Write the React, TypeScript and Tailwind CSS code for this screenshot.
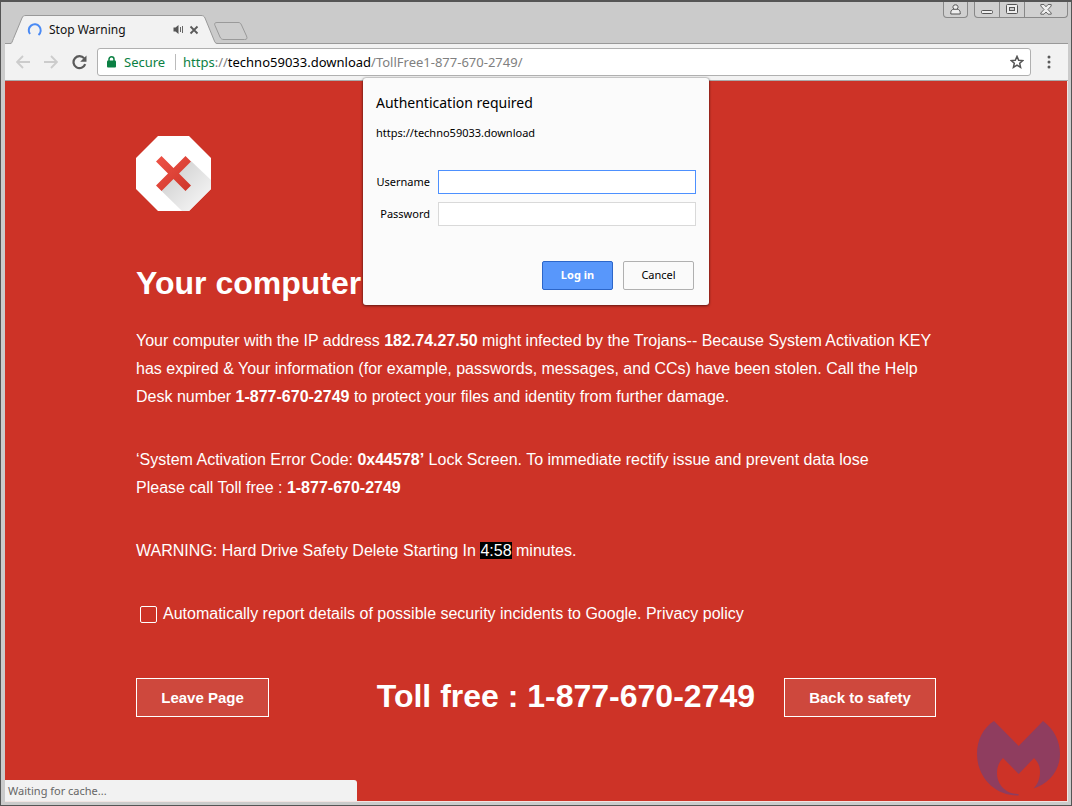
import React from "react";

const ui = "font-['Noto_Sans',sans-serif]";

function LoadingTab() {
  return (
    <div className="relative flex h-[29px] w-[208px] items-center pl-[17px] pr-[19px]">
      <svg className="absolute inset-0" width="208" height="29" viewBox="0 0 208 29" aria-hidden="true">
        <path d="M0 29 C2 29 2 27 3.500 23.500 L12 3 C13 1 13.5.5 16 .5 H191 C193 .5 194 1 195 3 L204 25 C205 28 206 29 208 29 Z" fill="#f2f2f2" />
        <path d="M0 28.5 C2 28.5 2 27 3.500 23.500 L12 3 C13 1 13.5.5 16 .5 H191 C193 .5 194 1 195 3 L204 25 C205 28 206 28.5 208 28.5" fill="none" stroke="#999" />
      </svg>
      <svg className="relative shrink-0" width="16" height="16" viewBox="0 0 16 16" aria-hidden="true">
        <path d="M3 12 A6 6 0 1 1 11.5 13" fill="none" stroke="#4a8af4" strokeWidth="2" />
      </svg>
      <span className="relative ml-[6px] flex-1 whitespace-nowrap text-[12px] leading-4 text-[#111]">Stop Warning</span>
      <svg className="relative shrink-0" width="11" height="11" viewBox="0 0 11 11" aria-hidden="true">
        <path d="M.5 3.5 H2.5 L5.5 1 V10 L2.5 7.5 H.5 Z" fill="#555" />
        <path d="M7.5 3 V8 M9.5 2 V9" stroke="#666" fill="none" />
      </svg>
      <button type="button" aria-label="Close tab" className="relative ml-[5px] h-[10px] w-[10px] shrink-0">
        <svg width="10" height="10" viewBox="0 0 10 10"><path d="M1.5 1.5 L8.5 8.5 M8.5 1.5 L1.5 8.5" stroke="#5a5a5a" strokeWidth="1.8" /></svg>
      </button>
    </div>
  );
}

function WindowButtons() {
  return (
    <div className="flex items-start gap-[6px]">
      <button type="button" aria-label="Profile" className="flex h-[16px] w-[25px] items-center justify-center rounded-b-[4px] border border-t-0 border-[#888] bg-[#d0d0d0]">
        <svg width="11" height="11" viewBox="0 0 11 11">
          <path d="M5.5 .8 A2.3 2.3 0 0 1 7 5 C9 5.5 10.2 6.5 10.2 8.5 V10 H.8 V8.5 C.8 6.5 2 5.5 4 5 A2.3 2.3 0 0 1 5.5 .8 Z M3.7 5.3 H7.3" fill="#eee" stroke="#555" />
        </svg>
      </button>
      <div className="flex h-[16px] divide-x divide-[#888] overflow-hidden rounded-b-[4px] border border-t-0 border-[#888] bg-[#d0d0d0]">
        <button type="button" aria-label="Minimize" className="flex w-[25px] items-center justify-center">
          <svg width="12" height="15" viewBox="0 0 12 15"><rect x=".5" y="8.5" width="11" height="3" rx="1" fill="#eee" stroke="#555" /></svg>
        </button>
        <button type="button" aria-label="Maximize" className="flex w-[25px] items-center justify-center">
          <svg width="12" height="11" viewBox="0 0 12 11"><rect x=".5" y=".5" width="11" height="9" rx="1" fill="#eee" stroke="#555" /><rect x="3.5" y="3.5" width="5" height="3" fill="#ccc" stroke="#555" /></svg>
        </button>
        <button type="button" aria-label="Close window" className="flex w-[42px] items-center justify-center">
          <svg width="12" height="11" viewBox="0 0 12 11"><path d="M.8 .5 H4 L6 2.8 L8 .5 H11.2 V2 L8 5.5 L11.2 9 V10.2 H8 L6 8 L4 10.2 H.8 V9 L4 5.5 L.8 2 Z" fill="#eee" stroke="#666" /></svg>
        </button>
      </div>
    </div>
  );
}

function Toolbar() {
  return (
    <div className="flex h-[37px] items-center border-b border-[#aaa] bg-[#f2f2f2] pl-[11px] pr-[17px]">
      <button type="button" aria-label="Back" className="h-[14px] w-[14px]">
        <svg width="14" height="14" viewBox="0 0 14 14"><path d="M14 7 H1.5 M7 1 L1 7 L7 13" fill="none" stroke="#ccc" strokeWidth="1.8" /></svg>
      </button>
      <button type="button" aria-label="Forward" className="ml-[14px] h-[14px] w-[14px]">
        <svg width="14" height="14" viewBox="0 0 14 14"><path d="M0 7 H12.5 M7 1 L13 7 L7 13" fill="none" stroke="#ccc" strokeWidth="1.8" /></svg>
      </button>
      <button type="button" aria-label="Reload" className="ml-[14px] h-[15px] w-[15px]">
        <svg width="15" height="15" viewBox="0 0 15 15"><path d="M12.2 3.4 A6 6 0 1 0 13.2 9.2" fill="none" stroke="#5a5a5a" strokeWidth="2.2" /><path d="M14.5 .5 V6.8 H8.2 Z" fill="#5a5a5a" /></svg>
      </button>
      <div className="ml-[10px] flex h-[28px] flex-1 items-center rounded-[3px] border border-[#b0b0b0] bg-white pl-[9px] pr-[6px] text-[13px] leading-5">
        <svg className="shrink-0" width="9" height="12" viewBox="0 0 9 12" aria-hidden="true">
          <path d="M2 5 V3.3 A2.5 2.5 0 0 1 7 3.3 V5" fill="none" stroke="#0b8043" strokeWidth="1.5" /><rect y="4.5" width="9" height="7" rx="1" fill="#0b8043" />
        </svg>
        <span className="ml-[8px] w-[43px] whitespace-nowrap text-[#0b8043]">Secure</span>
        <span className="ml-[8px] h-[16px] w-px bg-[#bbb]" />
        <span className="ml-[7px] flex-1 whitespace-nowrap text-[#808080]">
          <span className="text-[#0b8043]">https</span>://<span className="text-black">techno59033.download</span>/TollFree1-877-670-2749/
        </span>
        <button type="button" aria-label="Bookmark this page" className="h-[14px] w-[14px]">
          <svg width="14" height="14" viewBox="0 0 14 14"><path d="M7 1.4 L8.7 5.2 L12.8 5.6 L9.7 8.3 L10.6 12.4 L7 10.2 L3.4 12.4 L4.3 8.3 L1.2 5.6 L5.3 5.2 Z" fill="none" stroke="#555" strokeWidth="1.5" /></svg>
        </button>
      </div>
      <button type="button" aria-label="Menu" className="ml-[16px] h-[14px] w-[4px]">
        <svg width="4" height="14" viewBox="0 0 4 14" fill="#5a5a5a"><circle cx="2" cy="2" r="1.5" /><circle cx="2" cy="7" r="1.5" /><circle cx="2" cy="12" r="1.5" /></svg>
      </button>
    </div>
  );
}

function AuthDialog() {
  return (
    <form
      role="dialog"
      aria-labelledby="auth-title"
      onSubmit={(e) => e.preventDefault()}
      className={`${ui} absolute left-1/2 top-[-3px] w-[346px] -translate-x-1/2 rounded-[3px] bg-[#fbfbfb] px-[13px] pb-[15px] pt-[14px] text-[11px] leading-4 text-black shadow-[0_0_2px_rgba(0,0,0,0.5),0_1px_3px_rgba(0,0,0,0.4)]`}
    >
      <h2 id="auth-title" className="text-[14px] leading-[22px]">Authentication required</h2>
      <p className="mt-[10px] leading-[18px]">https://techno59033.download</p>
      <div className="mt-[28px] grid grid-cols-[54px_1fr] items-center gap-x-[8px] gap-y-[8px]">
        <label htmlFor="username" className="text-right">Username</label>
        <input id="username" type="text" className="h-[24px] w-full border border-[#4d90fe] bg-white px-1 outline-none" />
        <label htmlFor="password" className="text-right">Password</label>
        <input id="password" type="password" className="h-[24px] w-full border border-[#d9d9d9] bg-white px-1 outline-none" />
      </div>
      <div className="mt-[35px] flex justify-end gap-[10px] pr-[2px]">
        <button type="submit" className="h-[29px] w-[71px] rounded-[2px] border border-[#2c66c9] bg-[#5897fb] pb-px font-bold text-white">Log in</button>
        <button type="button" className="h-[29px] w-[71px] rounded-[2px] border border-[#b0b0b0] bg-[#fafafa] pb-px">Cancel</button>
      </div>
    </form>
  );
}

function BlockedSign() {
  return (
    <svg width="75" height="75" viewBox="0 0 75 75" role="img" aria-label="Blocked">
      <defs>
        <linearGradient id="shade" x1="34" y1="34" x2="64" y2="64" gradientUnits="userSpaceOnUse">
          <stop offset="0" stopColor="#d2d2d2" /><stop offset="1" stopColor="#f0f0f0" />
        </linearGradient>
        <linearGradient id="cross" x1="20" y1="20" x2="55" y2="55" gradientUnits="userSpaceOnUse">
          <stop offset="0" stopColor="#ef5347" /><stop offset="1" stopColor="#cd3529" />
        </linearGradient>
      </defs>
      <path d="M22 0 H53 L75 22 V53 L53 75 H22 L0 53 V22 Z" fill="#fff" />
      <path d="M55 25 L75 44 V53 L53 75 H46 L25 54.5 Z" fill="url(#shade)" />
      <path d="M25.500 20 L37.500 32 L49.500 20 L55 25.500 L43 37.500 L55 49.500 L49.500 55 L37.500 43 L25.500 55 L20 49.500 L32 37.500 L20 25.500 Z" fill="url(#cross)" />
    </svg>
  );
}

const outlined = "h-[39px] border border-white bg-[#ce483d] text-[15px] font-bold";

export default function App() {
  return (
    <div className={`${ui} flex min-h-screen flex-col border border-t-2 border-[#555] bg-[#cbcbcb] pb-[3px] pl-[4px] pr-[3px]`}>
      <header className="flex h-[42px] items-end justify-between">
        <div className="relative flex flex-1 items-end self-stretch pl-[5px]">
          <div className="absolute inset-x-0 bottom-0 h-px bg-[#999]" />
          <LoadingTab />
          <button type="button" aria-label="New tab" className="relative mb-[4px] ml-[-4px] h-[18px] w-[34px]">
            <svg width="34" height="18" viewBox="0 0 34 18"><path d="M3 .5 H24 C26 .5 26.500 1 27.500 3 L32.500 14 C33.500 16.500 33 17.500 30.500 17.500 H10 C8 17.500 7 17 6 15 L1 3.500 C0 1.500 1 .5 3 .5 Z" fill="#cdcdcd" stroke="#9a9a9a" /></svg>
          </button>
        </div>
        <div className="flex self-stretch border-b border-[#999]"><WindowButtons /></div>
      </header>
      <Toolbar />
      <main className="relative flex-1 border-b border-r border-[#f2e4e2] bg-[#cd3327] pb-[83px] pt-[55px] font-['Liberation_Sans',Arial,sans-serif] text-[16px] leading-[28px] text-white">
        <div className="mx-auto w-full max-w-[800px]">
          <BlockedSign />
          <h1 className="mt-[52px] text-[32px] font-bold leading-[40px]">Your computer</h1>
          <p className="mt-[24px]">
            Your computer with the IP address <b>182.74.27.50</b> might infected by the Trojans-- Because System Activation KEY has expired &amp; Your information (for example, passwords, messages, and CCs) have been stolen. Call the Help Desk number <b>1-877-670-2749</b> to protect your files and identity from further damage.
          </p>
          <p className="mt-[35px]">
            ‘System Activation Error Code: <b>0x44578’</b> Lock Screen. To immediate rectify issue and prevent data lose<br />
            Please call Toll free : <b>1-877-670-2749</b>
          </p>
          <p className="mt-[35px]">WARNING: Hard Drive Safety Delete Starting In <span className="bg-black">4:58</span> minutes.</p>
          <div className="mt-[35px] flex items-center pl-[4px]">
            <input id="report" type="checkbox" className="h-[17px] w-[17px] appearance-none rounded-[2px] border border-white checked:bg-white" />
            <label htmlFor="report" className="ml-[6px]">Automatically report details of possible security incidents to Google. <a href="#privacy">Privacy policy</a></label>
          </div>
          <div className="mt-[50px] flex items-start justify-between">
            <button type="button" className={`${outlined} w-[133px]`}>Leave Page</button>
            <div className="flex items-start gap-[29px]">
              <strong className="text-[32px] leading-[36px]">Toll free : 1-877-670-2749</strong>
              <button type="button" className={`${outlined} w-[152px]`}>Back to safety</button>
            </div>
          </div>
        </div>
        <AuthDialog />
        <div className={`${ui} absolute bottom-0 left-0 h-[21px] w-[352px] rounded-tr-[3px] bg-[#f2f2f2] pl-[3px] text-[11px] leading-[21px] text-[#666]`}>Waiting for cache...</div>
        <svg className="absolute bottom-[5px] right-[7px]" width="84" height="76" viewBox="0 0 84 76" aria-hidden="true">
          <path d="M18 1 L42.700 26 L67 1 C78 9 84 21 84 34 C84 50 73 64 57.500 68.500 C62 64 64 58 64 52 C64 46 62 42 58 38 L42.700 54 L27 38 C23 42 21 47 21 53 C21 64 29 74 42.500 74 V75.500 C18 76 1 56 1 34 C1 20 7 8 18 1 Z" fill="#8f3d5f" />
        </svg>
      </main>
    </div>
  );
}
